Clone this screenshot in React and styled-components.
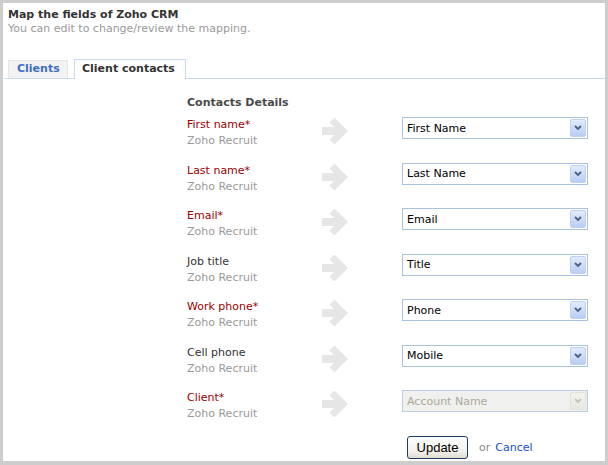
import React from "react";
import styled, { createGlobalStyle } from "styled-components";

const GlobalStyle = createGlobalStyle`
  html, body {
    margin: 0;
    padding: 0;
    background: #ffffff;
  }
  * {
    box-sizing: border-box;
  }
`;

const Frame = styled.div`
  width: 608px;
  height: 465px;
  border: 3px solid #cdcdcd;
  border-bottom-width: 4px;
  background: #ffffff;
  font-family: "DejaVu Sans", Verdana, sans-serif;
  font-size: 11px;
  color: #333333;
`;

const Header = styled.div`
  padding: 5px 5px 0;
  line-height: 14px;
`;

const Title = styled.div`
  font-weight: bold;
  color: #333333;
`;

const SubTitle = styled.div`
  color: #999999;
`;

const TabBar = styled.div`
  margin-top: 23px;
  margin-left: 1px;
  padding-left: 4px;
  display: flex;
  align-items: flex-end;
  gap: 6px;
  border-bottom: 1px solid #c6d9f1;
`;

const Tab = styled.div`
  width: ${(p) => (p.$active ? "112px" : "60px")};
  height: ${(p) => (p.$active ? "20px" : "18px")};
  margin-bottom: ${(p) => (p.$active ? "-1px" : "0")};
  padding: ${(p) => (p.$active ? "1px 0 0 7px" : "0 0 0 8px")};
  line-height: 16px;
  font-weight: bold;
  color: ${(p) => (p.$active ? "#333333" : "#3d6fc0")};
  background: ${(p) => (p.$active ? "#ffffff" : "#f2f2f2")};
  border: 1px solid ${(p) => (p.$active ? "#c6d9f1" : "#e6e6e6")};
  border-bottom: none;
  white-space: nowrap;
`;

const Content = styled.div`
  padding: 16px 0 0 184px;
`;

const Heading = styled.div`
  font-weight: bold;
  color: #4a4a4a;
  line-height: 16px;
  margin-bottom: 6px;
`;

const FieldGrid = styled.div`
  display: grid;
  grid-template-columns: 135px 80px 186px;
  grid-auto-rows: 45.5px;
`;

const LabelCell = styled.div`
  line-height: 16px;
`;

const FieldName = styled.div`
  color: ${(p) => (p.$required ? "#990000" : "#333333")};
`;

const Source = styled.div`
  color: #999999;
`;

const ArrowCell = styled.div`
  padding-top: 1px;
`;

const SelectBox = styled.div`
  height: 22px;
  width: 186px;
  display: flex;
  align-items: center;
  border: 1px solid ${(p) => (p.$disabled ? "#b9cde6" : "#a9c2e0")};
  background: ${(p) => (p.$disabled ? "#f0f0ee" : "#ffffff")};
  color: ${(p) => (p.$disabled ? "#aca899" : "#000000")};
  padding-left: 4px;
`;

const SelectText = styled.span`
  flex: 1;
  white-space: nowrap;
`;

const DropButton = styled.div`
  width: 16px;
  height: 18px;
  margin-right: 1px;
  display: flex;
  align-items: center;
  justify-content: center;
  border: 1px solid ${(p) => (p.$disabled ? "#e2e2dc" : "#bfd0f0")};
  border-radius: 2px;
  background: ${(p) =>
    p.$disabled
      ? "linear-gradient(#f4f4f0, #e8e8e2)"
      : "linear-gradient(#e2ebfc, #b9cdf4)"};
`;

const Actions = styled.div`
  grid-column: 3;
  align-self: start;
  display: flex;
  align-items: center;
  padding-left: 5px;
`;

const UpdateButton = styled.button`
  width: 61px;
  height: 23px;
  padding: 0;
  border: 1px solid #1f3d63;
  border-radius: 3px;
  background: linear-gradient(#ffffff, #f1f0ea 70%, #dedbd0);
  font-family: "Liberation Sans", Arial, sans-serif;
  font-size: 13px;
  color: #000000;
`;

const OrText = styled.span`
  margin-left: 11px;
  color: #888888;
`;

const CancelLink = styled.a`
  margin-left: 5px;
  color: #1a4fd0;
  text-decoration: none;
`;

const fields = [
  { label: "First name", required: true, value: "First Name" },
  { label: "Last name", required: true, value: "Last Name" },
  { label: "Email", required: true, value: "Email" },
  { label: "Job title", required: false, value: "Title" },
  { label: "Work phone", required: true, value: "Phone" },
  { label: "Cell phone", required: false, value: "Mobile" },
  { label: "Client", required: true, value: "Account Name", disabled: true },
];

const MapArrow = () => (
  <svg width="27" height="26" viewBox="0 0 27 26">
    <g stroke="#e6e6e6" fill="none" strokeLinejoin="miter">
      <path d="M0 13 H18" strokeWidth="8" />
      <path d="M10 2 L21 13 L10 24" strokeWidth="7" />
    </g>
  </svg>
);

const Chevron = ({ disabled }) => (
  <svg width="8" height="6" viewBox="0 0 8 6">
    <path
      d="M1 1 L4 4 L7 1"
      stroke={disabled ? "#c4c3b8" : "#4b5f82"}
      strokeWidth="1.8"
      fill="none"
    />
  </svg>
);

const App = () => {
  return (
    <>
      <GlobalStyle />
      <Frame>
        <Header>
          <Title>Map the fields of Zoho CRM</Title>
          <SubTitle>You can edit to change/review the mapping.</SubTitle>
        </Header>
        <TabBar>
          <Tab>Clients</Tab>
          <Tab $active>Client contacts</Tab>
        </TabBar>
        <Content>
          <Heading>Contacts Details</Heading>
          <FieldGrid>
            {fields.map((f) => (
              <React.Fragment key={f.label}>
                <LabelCell>
                  <FieldName $required={f.required}>
                    {f.label}
                    {f.required && "*"}
                  </FieldName>
                  <Source>Zoho Recruit</Source>
                </LabelCell>
                <ArrowCell>
                  <MapArrow />
                </ArrowCell>
                <div>
                  <SelectBox $disabled={f.disabled}>
                    <SelectText>{f.value}</SelectText>
                    <DropButton $disabled={f.disabled}>
                      <Chevron disabled={f.disabled} />
                    </DropButton>
                  </SelectBox>
                </div>
              </React.Fragment>
            ))}
            <Actions>
              <UpdateButton>Update</UpdateButton>
              <OrText>or</OrText>
              <CancelLink href="#">Cancel</CancelLink>
            </Actions>
          </FieldGrid>
        </Content>
      </Frame>
    </>
  );
};

export default App;
